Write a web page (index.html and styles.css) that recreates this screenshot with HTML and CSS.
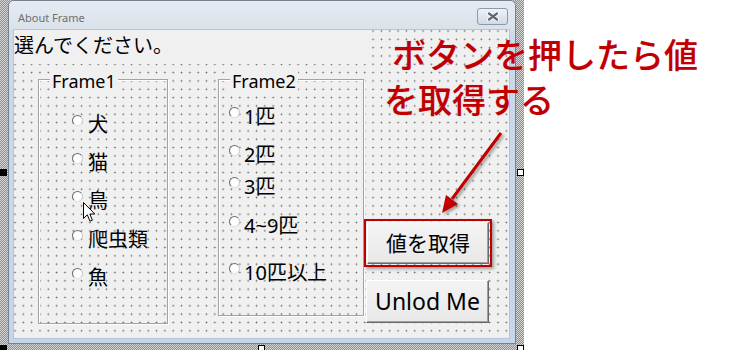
FILE: index.html
```html
<!DOCTYPE html>
<html lang="ja">
<head>
<meta charset="utf-8">
<title>About Frame</title>
<link rel="stylesheet" href="styles.css">
</head>
<body>
<div class="stage">
  <div class="designer">
    <div class="window">
      <div class="titlebar">
        <span class="title">About Frame</span>
        <span class="close"><svg width="12" height="9" viewBox="0 0 12 9"><path d="M2 1.5 L10 7.5 M10 1.5 L2 7.5" stroke="#fff" stroke-width="4" stroke-linecap="round"/><path d="M2 1.5 L10 7.5 M10 1.5 L2 7.5" stroke="#5d6671" stroke-width="2.2" stroke-linecap="round"/></svg></span>
      </div>
      <div class="client">
        <div class="prompt">選んでください。</div>
        <div class="controls">
          <fieldset class="frame frame1">
            <legend>Frame1</legend>
            <div class="opts">
              <div class="opt"><span class="radio"></span>犬</div>
              <div class="opt"><span class="radio"></span>猫</div>
              <div class="opt"><span class="radio"></span>鳥</div>
              <div class="opt"><span class="radio"></span>爬虫類</div>
              <div class="opt"><span class="radio"></span>魚</div>
            </div>
          </fieldset>
          <fieldset class="frame frame2">
            <legend>Frame2</legend>
            <div class="opts">
              <div class="opt"><span class="radio"></span>1匹</div>
              <div class="opt"><span class="radio"></span>2匹</div>
              <div class="opt"><span class="radio"></span>3匹</div>
              <div class="opt"><span class="radio"></span>4~9匹</div>
              <div class="opt"><span class="radio"></span>10匹以上</div>
            </div>
          </fieldset>
          <div class="buttons">
            <div class="highlight"><button class="btn get">値を取得</button></div>
            <button class="btn unload">Unlod Me</button>
          </div>
        </div>
      </div>
    </div>
    <span class="handle dark h-left"></span>
    <span class="handle h-right"></span>
    <span class="handle dark h-bl"></span>
    <span class="handle h-bm"></span>
    <span class="handle h-br"></span>
  </div>
  <div class="paper"></div>
</div>

<div class="note">
  <div class="line1">ボタンを押したら値</div>
  <div class="line2">を取得する</div>
</div>

<svg class="arrow" width="750" height="350" viewBox="0 0 750 350">
  <line x1="501" y1="133" x2="452" y2="199" stroke="#c00000" stroke-width="3"/>
  <polygon points="442,213 458,204 446,195" fill="#c00000"/>
</svg>

<svg class="cursor" width="13" height="21" viewBox="0 0 13 21">
  <path d="M0.5 0.5 L0.5 16.5 L4.3 12.8 L7 19.2 L9.4 18.2 L6.8 12 L11.8 12 Z" fill="#fff" stroke="#000" stroke-width="1"/>
</svg>
</body>
</html>
```

FILE: styles.css
```css
html, body {
  margin: 0;
  padding: 0;
}

body {
  width: 750px;
  height: 350px;
  overflow: hidden;
  background: #ffffff;
  font-family: "Noto Sans", "Noto Sans CJK JP", sans-serif;
  position: relative;
}

.stage {
  display: flex;
  height: 350px;
}

.designer {
  position: relative;
  width: 524px;
  height: 350px;
  box-sizing: border-box;
  padding: 0 8px 6px 8px;
  background: repeating-conic-gradient(#8e8e8e 0 25%, #d6d6d6 0 50%) 0 0 / 2px 2px;
}

.paper {
  flex: 1;
  background: #ffffff;
}

.window {
  width: 508px;
  height: 344px;
  box-sizing: border-box;
  border: 1px solid #76818e;
  border-radius: 6px 6px 0 0;
  background: linear-gradient(#dfe6ee, #cbd9ea 40px, #c6d6ea);
  display: flex;
  flex-direction: column;
  padding: 0 6px 5px 5px;
}

.titlebar {
  height: 29px;
  display: flex;
  align-items: flex-start;
  justify-content: space-between;
  margin: 0 -6px 0 -5px;
  padding: 0 7px 0 9px;
  background: linear-gradient(#e6ebf1, #d9e1ea);
  border-radius: 5px 5px 0 0;
}

.title {
  font-size: 11px;
  line-height: 11px;
  margin-top: 11px;
  color: #6f6f6f;
}

.close {
  margin-top: 7px;
  width: 31px;
  height: 17px;
  box-sizing: border-box;
  border: 1px solid #8d99a8;
  border-radius: 3px;
  background: linear-gradient(#eef2f6, #d2dae4);
  display: flex;
  align-items: center;
  justify-content: center;
}

.client {
  flex: 1;
  background-color: #f0f0f0;
  background-image: radial-gradient(circle, #5e5e5e 0.6px, rgba(94, 94, 94, 0) 1.1px);
  background-size: 8.33px 8.33px;
  background-position: -3.2px -3.2px;
  box-shadow: 0 0 0 1px #b6c6d9;
}

.prompt {
  width: 357px;
  height: 34px;
  background: #f0f0f0;
  font-family: "Noto Sans CJK JP", sans-serif;
  font-size: 20px;
  line-height: 30px;
  color: #000;
}

.controls {
  display: flex;
  align-items: flex-start;
}

.frame {
  box-sizing: border-box;
  margin: 3px 0 0 0;
  padding: 0;
  min-width: 0;
  border: 1px solid #a3a3a3;
  box-shadow: inset 1px 1px 0 #ffffff, 1px 1px 0 #ffffff;
}

.frame legend {
  margin-left: 11px;
  padding: 4px 2px 0 2px;
  font-size: 18px;
  line-height: 20px;
  background: #f0f0f0;
  color: #000;
}

.frame1 {
  width: 130px;
  height: 257px;
  margin-left: 24px;
}

.frame2 {
  width: 146px;
  height: 249px;
  margin-left: 50px;
}

.opt {
  display: flex;
  align-items: center;
  font-size: 20px;
  color: #000;
}

.radio {
  flex: none;
  width: 11px;
  height: 11px;
  box-sizing: border-box;
  border-radius: 50%;
  border: 1px solid;
  border-color: #6c6c6c #c8c8c8 #e0e0e0 #6c6c6c;
  background: radial-gradient(circle at 55% 55%, #ffffff 55%, #ececec 100%);
  margin-bottom: 6px;
}

.frame1 .opts {
  padding: 13px 0 0 33px;
}

.frame1 .opt {
  height: 38.4px;
}

.frame1 .radio {
  margin-right: 5px;
}

.frame2 .opts {
  padding: 9px 0 0 10px;
}

.frame2 .opt {
  height: 30px;
}

.frame2 .radio {
  margin-right: 4px;
}

.frame2 .opt:nth-child(2) { margin-top: 8.5px; }
.frame2 .opt:nth-child(3) { margin-top: 1.5px; }
.frame2 .opt:nth-child(4) { margin-top: 9.5px; }
.frame2 .opt:nth-child(5) { margin-top: 16.5px; }

.buttons {
  margin-top: 155px;
  display: flex;
  flex-direction: column;
  align-items: flex-start;
}

.highlight {
  width: 128px;
  height: 48px;
  box-sizing: border-box;
  border: 2px solid #c00000;
  padding: 1px;
  box-shadow: 2px 2px 3px rgba(0, 0, 0, 0.35);
}

.btn {
  box-sizing: border-box;
  margin: 0;
  padding: 0;
  font-family: "Noto Sans", "Noto Sans CJK JP", sans-serif;
  color: #000;
  background: linear-gradient(#f4f4f4, #e8e8e8);
  border: 1px solid;
  border-color: #ffffff #696969 #696969 #ffffff;
  box-shadow: inset -1px -1px 0 #a0a0a0;
}

.get {
  width: 122px;
  height: 42px;
  font-size: 21px;
  line-height: 40px;
}

.unload {
  margin: 13px 0 0 2px;
  width: 123px;
  height: 43px;
  font-size: 23px;
  line-height: 41px;
}

.handle {
  position: absolute;
  width: 7px;
  height: 7px;
  box-sizing: border-box;
  border: 1px solid #000;
  background: #fff;
}

.handle.dark {
  background: #000;
}

.h-left { left: 0; top: 169px; }
.h-right { left: 517px; top: 169px; }
.h-bl { left: 0; top: 345px; }
.h-bm { left: 258px; top: 345px; }
.h-br { left: 517px; top: 345px; }

.note {
  position: absolute;
  left: 384px;
  top: 31px;
  font-family: "Noto Sans CJK JP", sans-serif;
  font-size: 34px;
  font-weight: 500;
  line-height: 45px;
  color: #c00000;
  white-space: nowrap;
  text-shadow: 0 0 1px rgba(230, 80, 160, 0.35);
}

.line1 {
  padding-left: 8px;
}

.arrow {
  position: absolute;
  left: 0;
  top: 0;
  pointer-events: none;
  filter: drop-shadow(2px 2px 1.5px rgba(0, 0, 0, 0.35));
}

.cursor {
  position: absolute;
  left: 83px;
  top: 202px;
}
```
